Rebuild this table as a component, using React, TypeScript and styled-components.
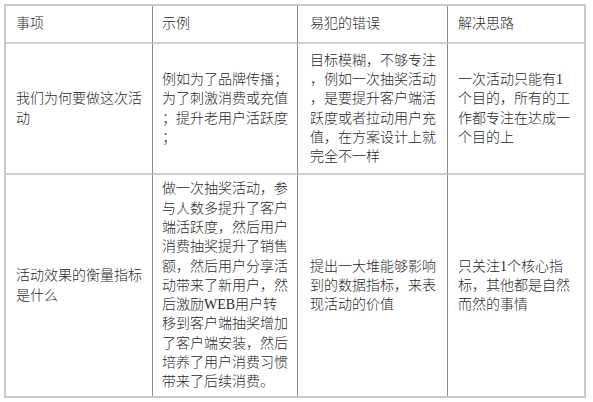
import React from "react";
import styled, { createGlobalStyle } from "styled-components";

const Global = createGlobalStyle`
  html, body { margin: 0; padding: 0; background: #ffffff; }
  body {
    font-family: "Liberation Serif", "Noto Sans CJK SC", serif;
    color: #2a2a2a;
  }
`;

const Page = styled.div`
  width: 593px;
  height: 402px;
  padding: 4px 0 0 4px;
  box-sizing: border-box;
`;

const Table = styled.div`
  display: grid;
  grid-template-columns: 147px 145px 150px 136px;
  grid-template-rows: 38px 131px 221px;
  width: 582px;
  box-sizing: border-box;
  border: 2px solid #c9c9c9;
`;

const Cell = styled.div<{ $last?: boolean; $lastRow?: boolean; $pad?: number }>`
  box-sizing: border-box;
  display: flex;
  flex-direction: column;
  justify-content: center;
  padding: 0 4px 0 ${(p) => p.$pad ?? 10}px;
  border-right: ${(p) => (p.$last ? "none" : "1px solid #8a8a8a")};
  border-bottom: ${(p) => (p.$lastRow ? "none" : "2px solid #cfcfcf")};
  font-size: 14px;
  font-weight: 300;
  line-height: 19.3px;
  white-space: nowrap;
  overflow: hidden;
`;

const Line = styled.span`
  display: block;
`;

type Row = string[][];

const header = [["事项"], ["示例"], ["易犯的错误"], ["解决思路"]];

const rows: Row[] = [
  [
    ["我们为何要做这次活", "动"],
    ["例如为了品牌传播；", "为了刺激消费或充值", "；提升老用户活跃度", "；"],
    [
      "目标模糊，不够专注",
      "，例如一次抽奖活动",
      "，是要提升客户端活",
      "跃度或者拉动用户充",
      "值，在方案设计上就",
      "完全不一样",
    ],
    ["一次活动只能有1", "个目的，所有的工", "作都专注在达成一", "个目的上"],
  ],
  [
    ["活动效果的衡量指标", "是什么"],
    [
      "做一次抽奖活动，参",
      "与人数多提升了客户",
      "端活跃度，然后用户",
      "消费抽奖提升了销售",
      "额，然后用户分享活",
      "动带来了新用户，然",
      "后激励WEB用户转",
      "移到客户端抽奖增加",
      "了客户端安装，然后",
      "培养了用户消费习惯",
      "带来了后续消费。",
    ],
    ["提出一大堆能够影响", "到的数据指标，来表", "现活动的价值"],
    ["只关注1个核心指", "标，其他都是自然", "而然的事情"],
  ],
];

const pads = [10, 9, 12, 10];

export default function App() {
  return (
    <>
      <Global />
      <Page>
        <Table>
          {header.map((lines, c) => (
            <Cell key={`h${c}`} $last={c === 3} $pad={pads[c]}>
              {lines.map((l, i) => (
                <Line key={i}>{l}</Line>
              ))}
            </Cell>
          ))}
          {rows.map((row, r) =>
            row.map((lines, c) => (
              <Cell
                key={`${r}-${c}`}
                $last={c === 3}
                $lastRow={r === rows.length - 1}
                $pad={pads[c]}
              >
                {lines.map((l, i) => (
                  <Line key={i}>{l}</Line>
                ))}
              </Cell>
            ))
          )}
        </Table>
      </Page>
    </>
  );
}
